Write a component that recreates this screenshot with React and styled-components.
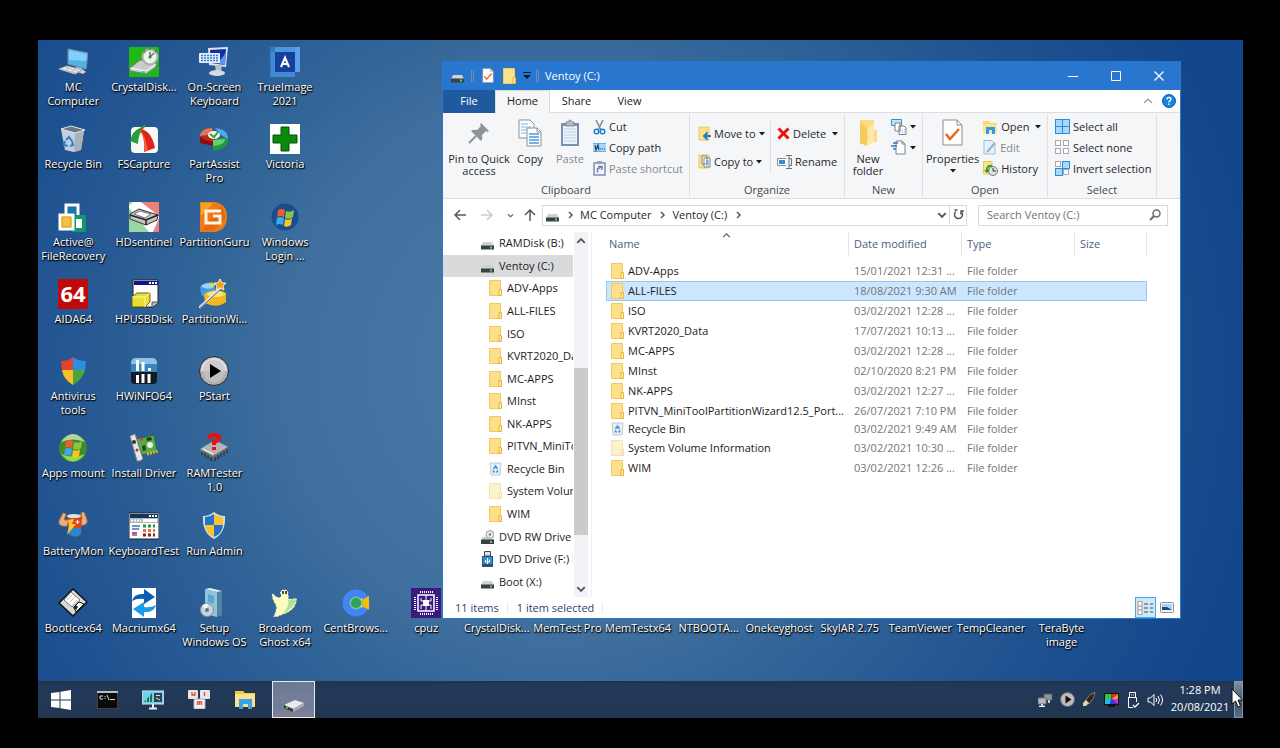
import React from "react";
import styled, { createGlobalStyle, css } from "styled-components";

const GlobalStyle = createGlobalStyle`
  *, *::before, *::after { box-sizing: border-box; }
  body { margin: 0; background: #000; font-family: "Open Sans", "Noto Sans", sans-serif; font-size: 11px; line-height: 12px; color: #1b1b1b; }
  button, input { font: inherit; color: inherit; }
  button { border: 0; padding: 0; margin: 0; background: none; }
  svg { display: block; flex: none; }
`;

/* ---------- screen, desktop, taskbar ---------- */
const Screen = styled.div`
  display: flex;
  min-height: 100vh;
  padding: 40px 37px 30px 38px;
  background: #000;
`;
const Monitor = styled.div`
  position: relative;
  flex: 1;
  min-width: 0;
  display: flex;
  flex-direction: column;
`;
const Desktop = styled.main`
  position: relative;
  flex: 1;
  display: flex;
  background: radial-gradient(circle farthest-corner at 43% 51%, #4b7ba7 0%, #3f6f9e 36%, #316497 48%, #285b94 60%, #1f5290 71%, #12468a 94%);
`;
const IconGrid = styled.div`
  flex: 1;
  display: grid;
  grid-template-columns: repeat(17, 1fr);
  grid-template-rows: repeat(8, 1fr);
  padding: 0 5px 23px 0;
`;
const Shortcut = styled.button`
  grid-column: ${(p) => p.$col};
  grid-row: ${(p) => p.$row};
  min-width: 0;
  display: flex;
  flex-direction: column;
  align-items: center;
  gap: 3px;
  padding-top: 7px;
`;
const ShortcutLabel = styled.span`
  color: #fff;
  line-height: 14px;
  white-space: pre;
  text-align: center;
  text-shadow: 1px 1px 1px #000, 0 1px 2px #000;
`;
const Taskbar = styled.footer`
  display: flex;
  height: 37px;
  background: linear-gradient(#20354b, #22395a 20%, #203650);
`;
const TaskButton = styled.button`
  width: ${(p) => (p.$active ? 43 : 46)}px;
  margin-left: ${(p) => (p.$active ? 4 : 0)}px;
  display: grid;
  place-items: center;
  ${(p) =>
    p.$active &&
    css`
      border: 1px solid #e9ecf2;
      background: linear-gradient(#6d7891, #767f9b 60%, #667f98 62%, #7f7f97 90%);
    `}
`;
const Tray = styled.div`
  margin-left: auto;
  display: flex;
`;
const TrayIcon = styled.button`
  width: 22px;
  display: grid;
  place-items: center;
`;
const Clock = styled.button`
  width: 68px;
  padding-bottom: 3px;
  color: #fff;
  line-height: 17px;
  text-align: center;
`;
const ShowDesktop = styled.button`
  width: 9px;
  border: 1px solid #8796a8;
  background: linear-gradient(#7f90a4, #3c5068 60%, #5a6d84);
`;
const Pointer = styled.div`
  position: absolute;
  right: 0;
  bottom: 10px;
`;

/* ---------- window ---------- */
const Window = styled.section`
  position: absolute;
  inset: 21px 62px 62px 404px;
  display: flex;
  flex-direction: column;
  border: 1px solid #2b78d0;
  border-top: 0;
  background: #fff;
`;
const TitleBar = styled.header`
  display: flex;
  align-items: center;
  height: 29px;
  padding-left: 8px;
  background: #2876cd;
  color: #fff;
`;
const QuickItem = styled.button`
  width: ${(p) => p.$w}px;
  display: flex;
  align-items: center;
`;
const Divider = styled.span`
  width: 3px;
  height: 12px;
  margin-right: ${(p) => p.$gap}px;
  border: 1px solid #6c8dba;
  border-width: 0 1px;
`;
const WindowTitle = styled.h1`
  flex: 1;
  margin: 0;
  font-size: 11px;
  font-weight: 400;
`;
const Caption = styled.button`
  width: 43px;
  height: 100%;
  display: grid;
  place-items: center;
`;
const Tabs = styled.nav`
  display: flex;
  height: 23px;
  padding-right: 4px;
  align-items: stretch;
  border-bottom: 1px solid #dcdde0;
`;
const Tab = styled.button`
  width: 53px;
  margin-bottom: -1px;
  padding-bottom: 2px;
  border: 1px solid transparent;
  border-bottom: 0;
  ${(p) =>
    p.$kind === "file" &&
    css`
      width: 52px;
      background: #1f5a9e;
      color: #fff;
    `}
  ${(p) =>
    p.$kind === "active" &&
    css`
      width: 55px;
      background: #f4f6f8;
      border-color: #dcdde0;
    `}
`;
const TabTools = styled.div`
  margin-left: auto;
  display: flex;
  align-items: center;
  gap: 9px;
`;
const Ribbon = styled.div`
  display: flex;
  height: 86px;
  padding-top: 1px;
  background: #f4f6f8;
  border-bottom: 1px solid #dcdfe2;
`;
const Group = styled.section`
  width: ${(p) => p.$w}px;
  display: flex;
  flex-direction: column;
  margin-bottom: 1px;
  border-right: 1px solid #dfe1e4;
`;
const GroupBody = styled.div`
  flex: 1;
  display: flex;
  padding: 2px 0 0 ${(p) => p.$pad}px;
`;
const GroupTitle = styled.h2`
  margin: 0;
  font-size: 11px;
  line-height: 14px;
  font-weight: 400;
  text-align: center;
  color: #46494e;
`;
const BigButton = styled.button`
  width: ${(p) => p.$w}px;
  display: flex;
  flex-direction: column;
  align-items: center;
  justify-content: flex-start;
  gap: 4px;
  white-space: pre;
  color: ${(p) => (p.disabled ? "#85888d" : "#26282b")};
`;
const BigArt = styled.span`
  height: 33px;
  display: grid;
  place-items: center;
`;
const Stack = styled.div`
  display: flex;
  flex-direction: column;
  width: ${(p) => p.$w}px;
  padding: ${(p) => (p.$loose ? "7px 0 7px" : "0")};
  gap: ${(p) => (p.$loose ? 7 : 0)}px;
  margin-left: ${(p) => p.$ml || 0}px;
`;
const SmallButton = styled.button`
  height: 21px;
  display: flex;
  align-items: center;
  gap: 3px;
  white-space: nowrap;
  text-align: left;
  color: ${(p) => (p.disabled ? "#85888d" : "#26282b")};
`;
const InnerRule = styled.span`
  width: 1px;
  height: 52px;
  margin: 5px 6px 0 0;
  background: #dfe1e4;
`;
const AddressRow = styled.div`
  display: flex;
  align-items: center;
  height: 33px;
  padding: 0 12px 1px 7px;
`;
const NavButton = styled.button`
  width: ${(p) => p.$w || 28}px;
  height: 21px;
  display: grid;
  place-items: center;
`;
const AddressBox = styled.div`
  flex: 1;
  display: flex;
  align-items: center;
  height: 21px;
  margin-right: 11px;
  padding-left: 3px;
  border: 1px solid #d9d9d9;
`;
const Crumb = styled.a`
  color: #26282b;
  text-decoration: none;
`;
const CrumbGap = styled.span`
  width: 21px;
  display: grid;
  place-items: center;
`;
const AddressEnd = styled.span`
  margin-left: auto;
  display: flex;
`;
const Refresh = styled.button`
  width: 17px;
  height: 19px;
  display: grid;
  place-items: center;
  border-left: 1px solid #d9d9d9;
`;
const SearchBox = styled.label`
  width: 190px;
  height: 21px;
  display: flex;
  align-items: center;
  padding: 0 6px 0 8px;
  border: 1px solid #d9d9d9;
`;
const SearchInput = styled.input`
  flex: 1;
  min-width: 0;
  padding: 0;
  border: 0;
  outline: 0;
  background: none;
  &::placeholder { color: #6f7277; opacity: 1; }
`;
const Body = styled.div`
  flex: 1;
  min-height: 0;
  display: flex;
`;
const Tree = styled.ul`
  width: 130px;
  margin: 0;
  padding: 0 0 4px;
  list-style: none;
  overflow: hidden;
  display: grid;
  grid-template-rows: repeat(16, 1fr);
`;
const TreeItem = styled.li`
  display: flex;
  align-items: center;
  gap: 5px;
  padding-left: ${(p) => (p.$level ? 46 : 38)}px;
  overflow: hidden;
  white-space: nowrap;
  background: ${(p) => (p.$selected ? "#d9dadb" : "none")};
`;
const ScrollBar = styled.div`
  width: 14px;
  margin-left: 1px;
  display: flex;
  flex-direction: column;
  background: #f2f3f6;
`;
const ScrollArrow = styled.button`
  height: 17px;
  display: grid;
  place-items: center;
`;
const ScrollTrack = styled.div`
  flex: 1;
  display: flex;
  flex-direction: column;
  padding: 119px 0 45px;
`;
const ScrollThumb = styled.span`
  flex: 1;
  background: #cbcbcb;
`;
const Files = styled.div`
  flex: 1;
  min-width: 0;
  margin-left: 3px;
  padding-left: 14px;
  border-left: 1px solid #f0f1f3;
`;
const FileTable = styled.table`
  position: relative;
  width: 541px;
  height: 246px;
  table-layout: fixed;
  border-collapse: collapse;
`;
const HeadCell = styled.th`
  width: ${(p) => p.$w}px;
  height: 29px;
  padding: 0;
  vertical-align: top;
  font-weight: 400;
  text-align: left;
  color: #4b5f7c;
`;
const HeadLabel = styled.button`
  display: block;
  width: 100%;
  height: 25px;
  padding: 0 0 2px ${(p) => (p.$first ? 3 : 5)}px;
  border-right: 1px solid #e3e5e8;
  text-align: left;
`;
const SortMark = styled.span`
  position: absolute;
  left: 116px;
  top: -1px;
`;
const FileRow = styled.tr`
  background: ${(p) => (p.$selected ? "#cce6fd" : "none")};
  outline: ${(p) => (p.$selected ? "1px solid #90c8f0" : "none")};
  outline-offset: -1px;
`;
const FileCell = styled.td`
  padding: 0 0 0 5px;
  color: #73767b;
  white-space: nowrap;
`;
const FileName = styled.span`
  display: flex;
  align-items: center;
  gap: 4px;
  color: #1b1b1b;
`;
const StatusBar = styled.footer`
  height: 21px;
  display: flex;
  align-items: center;
  padding: 0 3px 0 12px;
  color: #2c4568;
`;
const StatusItem = styled.span`
  padding-right: 8px;
  margin-right: 9px;
  border-right: 1px solid #e6e8eb;
`;
const ViewButtons = styled.span`
  margin-left: auto;
  display: flex;
`;
const ViewButton = styled.button`
  width: 21px;
  height: 21px;
  display: grid;
  place-items: center;
  border: 1px solid ${(p) => (p.$on ? "#4da7da" : "transparent")};
  background: ${(p) => (p.$on ? "#cbe8f6" : "none")};
`;

/* ---------- drawings ---------- */
const Art = ({ w = 30, h = w, box, children }) => (
  <svg width={w} height={h} viewBox={box || `0 0 ${w} ${h}`} fill="none" aria-hidden="true">
    {children}
  </svg>
);
const Flag = ({ x = 0, y = 0, s = 1 }) => (
  <g transform={`translate(${x} ${y}) scale(${s})`}>
    <path d="M2 2 Q5 0 9 2 L8 9 Q4 7 1 9Z" fill="#f0592a" />
    <path d="M10 3 Q14 5 18 2 L17 9 Q13 12 9 10Z" fill="#8cc63e" />
    <path d="M1 10 Q4 8 8 10 L7 17 Q3 15 0 17Z" fill="#3fa9f0" />
    <path d="M9 11 Q13 13 16 10 L15 17 Q11 20 8 18Z" fill="#fcc521" />
  </g>
);
const desktopArt = {
  pc: (
    <Art>
      <path d="M10 2 L30 6 L28 22 L10 17Z" fill="#4eb2ec" stroke="#7d8f9f" />
      <path d="M11 3 L29 7 L28 14 L11 13Z" fill="#7fd0fa" />
      <path d="M18 20 L17 24 L25 27 L28 25 L23 21Z" fill="#c6cdd3" />
      <path d="M1 22 L9 19 L24 23 L17 27Z" fill="#eceff2" stroke="#aab2ba" />
      <path d="M4 22.500 L18 26 M7 20.500 L21 24.500 M11 20 L8 24 M17 22 L13 26" stroke="#b3bbc3" />
    </Art>
  ),
  crystal: (
    <Art>
      <path fill="#1fb814" d="M0 0H30V30H0Z" />
      <path d="M1 21 L11 13 L27 16 V20 L17 27 L1 24Z" fill="#c9cbcd" stroke="#777" />
      <path d="M1 21 L17 24 L27 17" stroke="#fff" />
      <circle cx="21" cy="10" r="7.500" fill="#eef2ee" stroke="#a5b0aa" strokeWidth="2" />
      <path d="M21 0V3 M14 3L16 5 M28 3L26 5 M21 10L25 6 M21 10V5" stroke="#66756d" strokeWidth="1.500" />
      <circle cx="21" cy="10" r="1.500" fill="#208a30" />
      <path d="M13 25l3 .5" stroke="#1d6" strokeWidth="2" />
    </Art>
  ),
  osk: (
    <Art>
      <path d="M9 1 L29 0 L27 20 L10 18Z" fill="#dfe3e8" />
      <path d="M11 3 L27 2 L26 18 L12 16Z" fill="#0f2fa8" />
      <path d="M17 16 Q24 12 27 4 L26 18Z" fill="#5b93f0" />
      <path d="M16 18h7l-1 7h-5z" fill="#b9c2cb" />
      <ellipse cx="18" cy="26" rx="8" ry="3" fill="#d6dbe0" />
      <rect x="0" y="6" width="21" height="10" rx="1" fill="#e7eef7" />
      <path d="M2 8.500H19 M2 11H19 M2 13.500H19" stroke="#2f7fd0" strokeWidth="1.500" strokeDasharray="2 1" />
    </Art>
  ),
  trueimage: (
    <Art>
      <path d="M5 0H30V25H5Z" fill="#5ba0e8" />
      <path d="M0 0H25V30H0Z" fill="#3f8fe0" opacity=".55" />
      <path d="M1 5H25V30H1Z" fill="#4a95e2" opacity=".6" />
      <path d="M5 5H25V25H5Z" fill="#173f9c" />
      <path d="M11 20 L15 10.500 L19 20 M12.500 17H17.500" stroke="#fff" strokeWidth="2" />
    </Art>
  ),
  bin: (
    <Art>
      <path d="M3 5 L26 7 L23 26 L16 28 L7 26Z" fill="#c7d0d8" />
      <path d="M17 9 L26 6 L23 26 L16 28Z" fill="#a7b2bd" />
      <path d="M3 5 L13 2 L27 6 L17 9Z" fill="#6b7783" stroke="#e1e7ec" />
      <path d="M8 16l3-3 3 4M7 17l-1 4 4 1M12 22l3-1-1-4" stroke="#2385d8" strokeWidth="2" />
    </Art>
  ),
  fscapture: (
    <Art>
      <rect x="2" y="3" width="27" height="26" rx="4" fill="#f7f7f7" />
      <path d="M11 4 L16 0 L16 3 Q9 9 9 20 L1 17 Q3 7 11 4Z" fill="#25a035" />
      <path d="M10 5 Q22 5 26 24 L15 28 Q17 14 10 5Z" fill="#dd2418" />
      <path d="M10 5 Q15 7 19 26 L15 28 Q17 14 10 5Z" fill="#f45c40" />
    </Art>
  ),
  partassist: (
    <Art>
      <path d="M1 13v6l14 3v-6Z" fill="#8e0c0c" />
      <path d="M14 16 L29 13v5q-3 8-15 9Z" fill="#239a42" />
      <path d="M1 12 Q2 4 13 4 L14 10Z" fill="#f0724d" />
      <path d="M16 4 Q29 5 29 15 L22 11Z" fill="#50a9ed" />
      <path d="M1 12 L10 12 L15 16 L15 18 Q4 17 1 12Z" fill="#c52218" />
      <path d="M14 16 L26 15 Q26 21 14 22Z" fill="#68cf70" />
      <ellipse cx="15" cy="11" rx="6" ry="4" fill="#f1f6ee" />
      <path d="M11 10l4 3 4-5" stroke="#38a030" strokeWidth="2" />
    </Art>
  ),
  victoria: (
    <Art>
      <path d="M0 0H30V30H0Z" fill="#fff" />
      <path d="M11 3H19V11H27V19H19V27H11V19H3V11H11Z" fill="#0a8a0a" stroke="#04550a" />
    </Art>
  ),
  active: (
    <Art>
      <path d="M8 3H20V15H8Z" fill="#1b62a5" stroke="#fff" strokeWidth="3" />
      <path d="M10 5H18V13H10Z" fill="#1475b5" />
      <path d="M16 15H26V28H16Z" fill="#fff" stroke="#12966d" strokeWidth="4" />
      <path d="M2 13H15V27H2Z" fill="#f1c243" stroke="#fff" strokeWidth="3" />
      <path d="M4 15H13V25H4Z" stroke="#d99f20" />
    </Art>
  ),
  hds: (
    <Art>
      <path d="M0 0H30V30H0Z" fill="#fff" />
      <path d="M12 0H30V14Z M30 16V30H24Z" fill="#ee6058" opacity=".8" />
      <path d="M0 6V30H20Z M0 0H4L0 4Z" fill="#7fca8e" opacity=".8" />
      <path d="M1 12 L10 7 L29 13 L28 18 L17 23 L1 17Z" fill="#c4c4c4" stroke="#333" />
      <path d="M1 13 L17 18 L29 13 M17 18V23" stroke="#222" strokeWidth="1.500" />
      <path d="M5 12 L11 9 L22 12 L16 16Z" fill="#fff" stroke="#777" />
    </Art>
  ),
  guru: (
    <Art>
      <path d="M1 0H16 Q28 2 28 15 Q28 28 16 30H1Z" fill="#ee7c14" />
      <path d="M2 1H14 L2 14Z" fill="#f6a42a" />
      <path d="M3 28 L22 4 Q27 10 26 17 L14 29Z" fill="#dd5d12" opacity=".6" />
      <path d="M22 9H7V21H21V14H14" stroke="#fff4e2" strokeWidth="3" />
    </Art>
  ),
  login: (
    <Art>
      <circle cx="15" cy="15" r="13.500" fill="#174e8f" />
      <Flag x={6} y={6} />
    </Art>
  ),
  aida: (
    <Art>
      <path d="M0 0H30V30H0Z" fill="#bf0a0a" />
      <text x="15" y="23" textAnchor="middle" fontFamily="Open Sans" fontWeight="700" fontSize="22" fill="#fff">64</text>
    </Art>
  ),
  hpusb: (
    <Art>
      <path d="M4 1H29V24L24 28H4Z" fill="#fff" stroke="#222" />
      <path d="M5 2H29V6H5Z" fill="#101090" />
      <path d="M20 4h8" stroke="#fff" strokeWidth="2" strokeDasharray="2 1" />
      <path d="M23 28V23H29" fill="#b9b9b9" stroke="#555" />
      <path d="M3 18 L8 14 H21 V23 L16 28 H3Z" fill="#e7de3c" stroke="#6b6200" />
      <path d="M3 18H16V28 M16 18L21 14" stroke="#fffa9a" />
    </Art>
  ),
  wizard: (
    <Art>
      <path d="M1 8 Q5 2 16 4 V18 Q6 22 2 15Z" fill="#3f9be8" />
      <path d="M2 7 Q8 2 16 5 L14 9 Q6 11 2 7Z" fill="#9fd2f7" />
      <path d="M5 15 Q16 8 27 14 V23 Q18 30 6 24Z" fill="#f0b91f" />
      <ellipse cx="17" cy="15" rx="9" ry="3" fill="#fbe274" />
      <path d="M21 0l2 4 4 0-3 3 1 4-4-2-4 2 1-4-3-3 4 0Z" fill="#f39a20" stroke="#fff0b0" />
      <path d="M13 3l1 2 2 0-1 2-3 1-1-3Z M24 12l1 2 2 0-2 3-2-1Z" fill="#d8e23a" />
      <path d="M0 29 L22 9" stroke="#dfe3ea" strokeWidth="2.500" />
      <path d="M0 30 L22 10" stroke="#596273" />
    </Art>
  ),
  antivirus: (
    <Art>
      <path d="M15 1 Q10 5 3 5 L4 14 H15Z" fill="#e0442e" />
      <path d="M15 1 Q20 5 28 5 L27 14 H15Z" fill="#2f8fdf" />
      <path d="M4 14 H15 V29 Q5 23 4 14Z" fill="#f9c126" />
      <path d="M27 14 H15 V29 Q25 23 27 14Z" fill="#4ba63a" />
    </Art>
  ),
  hwinfo: (
    <Art>
      <rect x="2" y="2" width="26" height="26" rx="4" fill="#141a22" />
      <path d="M2 16V6Q2 2 6 2H24Q28 2 28 6V16Z" fill="#3a86bc" />
      <path d="M2 8Q2 2 6 2H24Q28 2 28 8Z" fill="#8cc2e4" />
      <path d="M8.500 4V15 M14 6V15 M8.500 19V27 M14 18V27 M20 18V27" stroke="#fff" strokeWidth="3" />
      <path d="M19 12h3v3h-3z" fill="#fff" />
    </Art>
  ),
  pstart: (
    <Art>
      <circle cx="15" cy="15" r="14.500" fill="#b0b0b0" stroke="#2a2a2a" />
      <path d="M2 15 A13 13 0 0 1 28 15Z" fill="#dedede" />
      <circle cx="15" cy="15" r="11" fill="#c4c4c4" opacity=".7" />
      <path d="M11 8 L22 15 L11 22Z" fill="#000" />
    </Art>
  ),
  apps: (
    <Art>
      <circle cx="15" cy="15" r="14" fill="#3f8c2c" />
      <path d="M3 9 Q15 -7 27 9 Q15 4 3 9Z" fill="#b5d6a4" />
      <path d="M3 21 Q15 36 27 21 Q15 26 3 21Z" fill="#93dd48" />
      <Flag x={6} y={6} />
    </Art>
  ),
  driver: (
    <Art>
      <path d="M7 6 L25 2 L28 18 L13 22Z" fill="#57aa4c" stroke="#2c6a28" />
      <path d="M1 3 L6 1 L14 26 L11 28 L8 28Z" fill="#e4e6e8" stroke="#7b8086" />
      <circle cx="5" cy="9" r="2" fill="#333" /><circle cx="8" cy="17" r="1.500" fill="#a33" />
      <circle cx="21" cy="12" r="3" fill="#e6f3e2" />
      <path d="M17 5l5-1 1 3-5 1z M13 13l3-1 1 5-3 1z" fill="#243a24" />
      <path d="M11 7l3-1" stroke="#e33" strokeWidth="2" />
      <path d="M18 21 L29 18" stroke="#e3b63a" strokeWidth="3" strokeDasharray="2 1" />
    </Art>
  ),
  ram: (
    <Art>
      <path d="M1 16 L16 7 L29 14 L14 23Z" fill="#b4b4b4" />
      <path d="M1 16 L14 23 V26 L1 18Z M14 23 L29 14 V17 L14 26Z" fill="#6d6d6d" />
      <path d="M3 19v3 M6 20v4 M9 22v4 M12 24v4 M16 24v4 M19 22v4 M22 20v4 M25 18v4 M28 16v4" stroke="#222" />
      <path d="M4 16 L14 21" stroke="#fff" />
      <path d="M10 6 Q10 2 15 2 Q20 2 20 5 Q20 8 15 9 V12" stroke="#f20d0d" strokeWidth="4" />
      <path d="M13 14h4v3h-4z" fill="#f20d0d" />
    </Art>
  ),
  battery: (
    <Art>
      <path d="M9 15 Q0 16 1 10 L5 2 L8 3 L6 9 L11 9Z M22 14 Q30 15 29 9 L26 1 L23 2 L24 8 L20 9Z" fill="#e9b083" stroke="#b57845" />
      <path d="M9 5 H24 L23 23 Q17 28 11 23Z" fill="#d8461c" />
      <ellipse cx="16" cy="5" rx="7" ry="2" fill="#dfe3e6" />
      <path d="M11 17 H23 L23 23 Q17 28 11 23Z" fill="#2f86cf" />
      <path d="M10 9 L16 8 L14 13 L18 13 L9 24 L11 15Z" fill="#f8ca2b" />
      <path d="M19.500 9v4M17.500 11h4" stroke="#fff" />
    </Art>
  ),
  kbtest: (
    <Art>
      <path d="M0 2H30V28H0Z" fill="#fff" stroke="#222" />
      <path d="M1 3H29V7H1Z" fill="#10365f" />
      <path d="M20 5h8" stroke="#fff" strokeWidth="2" strokeDasharray="2 1" />
      <path d="M1 7H29V12H1Z" fill="#b3b7bd" />
      <path d="M2 9.500H12" stroke="#fff" strokeWidth="2" strokeDasharray="2 1" /><path d="M14 9.500H28" stroke="#fff" strokeWidth="3" />
      <path d="M3 15H11M3 18H10M3 24H8" stroke="#3b73c4" strokeWidth="1.500" /><path d="M3 22h5" stroke="#e44" strokeWidth="2" />
      <path d="M14 15h12" stroke="#293" strokeWidth="3" strokeDasharray="3 2" /><path d="M14 19.500h12" stroke="#d73" strokeWidth="3" strokeDasharray="3 2" /><path d="M14 24h12" stroke="#822" strokeWidth="3" strokeDasharray="3 2" />
    </Art>
  ),
  admin: (
    <Art>
      <path d="M15 1 Q20 5 26 5 Q27 22 15 28 Q3 22 4 5 Q10 5 15 1Z" fill="#d6dde6" />
      <path d="M15 3 Q11 6 6 6 V14 H15Z M15 14 H24 Q23 23 15 26Z" fill="#2373ce" />
      <path d="M15 3 Q19 6 24 6 V14 H15Z M15 14 H6 Q7 23 15 26Z" fill="#f9c52b" />
    </Art>
  ),
  floppy: (
    <Art>
      <path d="M15 1 L29 14 L15 28 L1 15Z" fill="#d9d9d9" stroke="#111" strokeWidth="1.500" />
      <path d="M13 4 L22 12 L14 19 L6 12Z" fill="#fff" stroke="#777" />
      <path d="M9 12 L14 7 M12 14 L17 9 M14 17 L19 12" stroke="#bbb" />
      <path d="M16 19 L21 14 L26 16 L18 24Z" fill="#fff" stroke="#111" />
      <path d="M18 17l2 2-2 3-3-2z" fill="#222" />
    </Art>
  ),
  macrium: (
    <Art>
      <path d="M3 0H27V30H3Z" fill="#fff" />
      <path d="M3 13 Q5 5 15 6 V1 L26 9 L15 16 V11 Q8 10 3 13Z" fill="#0c5fb0" />
      <path d="M27 17 Q25 25 15 24 V29 L4 21 L15 14 V19 Q22 20 27 17Z" fill="#1d9ae8" />
    </Art>
  ),
  setup: (
    <Art>
      <path d="M6 1 L18 4 V29 L6 26Z" fill="#8fc4df" />
      <path d="M18 4 L23 3 V27 L18 29Z" fill="#52849e" />
      <path d="M6 1 L11 0 L23 3 L18 4Z" fill="#dff1f8" />
      <path d="M9 6 L15 8 V16 L9 14Z" fill="#5fa6cb" />
      <circle cx="8" cy="22" r="6.500" fill="#cdd3d8" stroke="#848d96" />
      <path d="M8 22 L3 18 A6 6 0 0 1 9 16Z" fill="#f4f7f9" />
      <circle cx="8" cy="22" r="2" fill="#52789a" />
    </Art>
  ),
  ghost: (
    <Art>
      <path d="M10 4 Q13 -1 18 3 L19 11 L27 10 Q27 20 17 25 L7 29 L3 29 Q8 20 5 16 Q1 10 2 5 L7 9 L11 9Z" fill="#fdfbbd" stroke="#2b62c8" strokeDasharray="2 2" />
      <path d="M27 11 Q25 20 12 26 Q20 18 18 12Z" fill="#b4e29a" />
      <path d="M13 3v3M16 3v3" stroke="#111" strokeWidth="1.500" />
    </Art>
  ),
  cent: (
    <Art>
      <circle cx="15" cy="15" r="13.500" fill="#4285f4" />
      <path d="M15 15 L28 8 V22Z" fill="#fbbc05" />
      <path d="M15 15 L21 10 V20Z" fill="#fff" />
      <circle cx="15" cy="15" r="6.500" fill="#7fc0a5" />
      <circle cx="15" cy="15" r="5" fill="#2fa44f" />
    </Art>
  ),
  cpuz: (
    <Art>
      <path d="M0 0H30V30H0Z" fill="#3b1a80" />
      <path d="M7 7H23V23H7Z" stroke="#fff" strokeWidth="1.500" />
      <path d="M12 12H18V18H12Z" fill="#fff" />
      <path d="M9 4H22 M9 26H22" stroke="#fff" strokeWidth="2" strokeDasharray="1 1" />
      <path d="M4 9V22 M26 9V22" stroke="#fff" strokeWidth="2" strokeDasharray="1 1" />
      <path d="M10 10V13H12 M20 10V13H18 M10 21V17H12 M20 21V17H18 M15 7V12M15 18V23" stroke="#fff" />
    </Art>
  ),
};

const Folder = ({ w = 13, h = 16, pale }) => (
  <Art w={w} h={h} box="0 0 13 16">
    <path d="M.5 .5H11.500V15.500H.5Z" fill={pale ? "#fbf3cd" : "#ffe08a"} stroke={pale ? "#f5e3ab" : "#efc862"} />
    <path d="M10 9.500V15.500H12.500V9.500Z" fill={pale ? "#fdf6d9" : "#ffeaa6"} stroke={pale ? "#f0dca0" : "#e5b53c"} />
  </Art>
);
const Drive = () => (
  <Art w={13} h={14}>
    <path d="M2 6H11L13 10H0Z" fill="#cfd1d3" />
    <path d="M0 9.500H13V13.500H0Z" fill="#3c4043" />
    <path d="M9 11.500h2" stroke="#3fe04a" strokeWidth="2" />
  </Art>
);
const MiniBin = () => (
  <Art w={13} h={14}>
    <path d="M1 1H12L11 13H2Z" fill="#e9eef2" stroke="#c3cbd2" />
    <path d="M4.500 7L6.500 4L8.500 7M4 8.500L5.500 10.500M9 8.500L7.500 10.500" stroke="#3597d8" strokeWidth="1.500" />
  </Art>
);
const DvdDrive = () => (
  <Art w={13} h={14}>
    <circle cx="9" cy="4.500" r="4" fill="#e8eaec" stroke="#999fa5" />
    <circle cx="9" cy="4.500" r="1.200" fill="#777" />
    <path d="M2 7H9L13 10H0Z" fill="#c2c5c8" /><path d="M0 9.500H13V14H0Z" fill="#3c4043" />
    <path d="M9 12h2" stroke="#3fe04a" strokeWidth="2" />
  </Art>
);
const UsbDrive = () => (
  <Art w={13} h={16}>
    <path d="M3.500 .5H9.500V5H3.500Z" fill="#dde1e5" stroke="#454b52" />
    <path d="M1 5H12V16H1Z" fill="#20547e" /><path d="M2 6H11V13H2Z" fill="#2f8fcf" />
    <path d="M6.500 7V13M4.500 9V11H8.500V8.500" stroke="#fff" />
  </Art>
);
const Chevron = ({ dir = "right", s = 8, color = "#55585c", sw = 1.5 }) => {
  const d = { right: "M3 1L6 4L3 7", down: "M1 2.500L4 5.500L7 2.500", up: "M1 5.500L4 2.500L7 5.500" }[dir];
  return (
    <Art w={s} h={s} box="0 0 8 8">
      <path d={d} stroke={color} strokeWidth={sw} />
    </Art>
  );
};
const Caret = ({ color = "#1b1b1b" }) => (
  <Art w={6} h={4}><path d="M0 0H6L3 3.500Z" fill={color} /></Art>
);
const Arrow = ({ d, color }) => (
  <Art w={12} h={12}><path d={d} stroke={color} strokeWidth="1.500" /></Art>
);
const Tick = ({ w, h }) => (
  <Art w={w} h={h} box="0 0 21 27">
    <path d="M1 1H15L20 6V26H1Z" fill="#fff" stroke="#8a8d91" />
    <path d="M15 1V6H20" stroke="#8a8d91" />
    <path d="M4 15L8 20L17 10" stroke="#ee6420" strokeWidth="2.500" />
  </Art>
);
const ribbonArt = {
  pin: (
    <Art w={22} h={22}>
      <path d="M13 1L21 9L19 10L18 9L14 13Q15 17 13 19L3 9Q5 7 9 8L13 4L12 3Z" fill="#8b969b" />
      <path d="M8 14L1 21" stroke="#8b969b" strokeWidth="2" />
    </Art>
  ),
  copy: (
    <Art w={24} h={28}>
      <path d="M1 1H12L16 5V19H1Z" fill="#fff" stroke="#8a9098" />
      <path d="M3 5H10M3 8H13M3 11H13M3 14H13" stroke="#79b4ea" />
      <path d="M9 9H19L23 13V27H9Z" fill="#fff" stroke="#8a9098" /><path d="M19 9V13H23" stroke="#8a9098" />
      <path d="M11 15H21M11 18H21M11 21H21M11 24H21" stroke="#4a97e0" strokeWidth="1.500" />
    </Art>
  ),
  paste: (
    <Art w={20} h={28}>
      <path d="M1 4H19V27H1Z" fill="#7c8fb3" /><path d="M3 7H17V25H3Z" fill="#eef3fa" />
      <path d="M4 10H16M4 13H16M4 16H16M4 19H16M4 22H16" stroke="#bcd0ea" />
      <path d="M6 3H8Q10 -1 12 3H14V7H6Z" fill="#b5bac2" stroke="#858b95" />
    </Art>
  ),
  cut: (
    <Art w={13} h={16}>
      <path d="M3 1L8 11M10 1L5 11" stroke="#7e8790" strokeWidth="1.500" />
      <circle cx="3.500" cy="12.500" r="2.300" stroke="#1d7fd0" strokeWidth="1.500" />
      <circle cx="9.500" cy="12.500" r="2.300" stroke="#1d7fd0" strokeWidth="1.500" />
    </Art>
  ),
  path: (
    <Art w={13} h={9}>
      <path d="M0 0H13V9H0Z" fill="#a5d8f6" /><path d="M0 .5H13M0 8.500H13" stroke="#69b1de" />
      <path d="M2 2L3 7L5 2L6 7" stroke="#1c3e5c" strokeWidth="1.200" /><path d="M7 6H12" stroke="#1c3e5c" strokeDasharray="1 1" />
    </Art>
  ),
  shortcut: (
    <Art w={13} h={15}>
      <path d="M1 2H12V14H1Z" fill="#f2f5fa" stroke="#7f8fb5" strokeWidth="1.500" /><path d="M4 0H9V3H4Z" fill="#9aa3b5" />
      <path d="M4.500 11.500V8L8 6M5 5.500H9V9" stroke="#6c84b5" strokeWidth="1.500" />
    </Art>
  ),
  move: (
    <Art w={13} h={15}>
      <path d="M1 1H11V14H1Z" fill="#ffe08a" stroke="#efc862" />
      <path d="M13 10H8M8.500 7.500L6 10L8.500 12.500Z" stroke="#1d7fd0" strokeWidth="2" fill="#1d7fd0" />
    </Art>
  ),
  copyto: (
    <Art w={13} h={15}>
      <path d="M1 1H11V14H1Z" fill="#ffe08a" stroke="#efc862" />
      <path d="M4 2H9V10H4Z M6 4H12V13H6Z" fill="#fff" stroke="#7d858e" /><path d="M8 7H11M8 9H11M8 11H11" stroke="#4a97e0" />
    </Art>
  ),
  del: (
    <Art w={13} h={13}><path d="M1.500 1.500L11.500 11.500M11.500 1.500L1.500 11.500" stroke="#e81212" strokeWidth="3" /></Art>
  ),
  rename: (
    <Art w={15} h={14}>
      <path d="M9 3.500H.5V10.500H9" fill="#fff" stroke="#8a9098" /><path d="M2 5H8V9H2Z" fill="#2e90dd" />
      <path d="M9 .5H15M12 .5V13.500M9 13.500H15M12 3.500H14.500V10.500H12" stroke="#6c7278" />
    </Art>
  ),
  newfolder: (
    <Art w={19} h={26}>
      <path d="M1 0H15V10H18V22H8L1 24Z" fill="#fbdc84" /><path d="M1 1L8 8V26L1 23Z" fill="#f5c95c" />
      <path d="M8 8Q11 15 8 26L15 22V4Z" fill="#ffe9a8" />
    </Art>
  ),
  newitem: (
    <Art w={16} h={16}>
      <path d="M.5 .5H10.500V6.500H.5Z" fill="#bfe3f4" stroke="#3f8fb5" />
      <path d="M4 4H9V12H4Z M8 7H13L15 9V15.500H8Z" fill="#fff" stroke="#7b8288" /><path d="M9 11H14M9 13H14" stroke="#7fb3dd" strokeDasharray="1 1" />
    </Art>
  ),
  easy: (
    <Art w={16} h={15}>
      <path d="M5 1H11L14 4V14H5Z" fill="#fff" stroke="#7b8288" /><path d="M11 1V4H14" stroke="#7b8288" />
      <path d="M2 3H7M0 6H6M2 9H5" stroke="#2a7ec6" strokeWidth="1.500" />
    </Art>
  ),
  open: (
    <Art w={15} h={14}>
      <path d="M0 1H6L7 3H14V12H0Z" fill="#fbd869" /><path d="M0 4H14V13H0Z" fill="#ffe48f" />
      <path d="M3 14V7H12V14H9V10H6V14Z" fill="#2d9be8" />
    </Art>
  ),
  edit: (
    <Art w={14} h={15}>
      <path d="M1 .5H9L12 4V14H1Z" fill="#e4f1fa" stroke="#a5bccd" /><path d="M4 12L12 3" stroke="#8fb3cb" strokeWidth="2" />
    </Art>
  ),
  history: (
    <Art w={15} h={15}>
      <path d="M.5 .5H9V13H.5Z" fill="#ffe08a" stroke="#efc862" />
      <circle cx="10" cy="10" r="4.500" fill="#dfe6e0" stroke="#6f7780" /><path d="M10 7V10H13" stroke="#333" />
      <path d="M4 9Q4 4 9 5" stroke="#22a030" strokeWidth="2" /><path d="M1 9H7L4 12Z" fill="#22a030" />
    </Art>
  ),
};
const SelectArt = ({ on = [] }) => (
  <Art w={15} h={15}>
    {[[0, 0], [8, 0], [0, 8], [8, 8]].map(([x, y], i) =>
      on.includes(i) ? (
        <rect key={i} x={x ? 7.5 : 0.5} y={y ? 7.5 : 0.5} width="7" height="7" fill="#a8d9fb" stroke="#2b8cdc" />
      ) : (
        <rect key={i} x={x + 0.5} y={y + 0.5} width="5" height="5" fill="#fff" stroke="#a6aaaf" />
      )
    )}
  </Art>
);

const taskArt = {
  start: (
    <Art w={20} h={20}>
      <path d="M0 3L8.500 2V9.500H0Z M9.500 1.800L20 0V9.500H9.500Z M0 10.500H8.500V18L0 17Z M9.500 10.500H20V20L9.500 18.200Z" fill="#fff" />
    </Art>
  ),
  cmd: (
    <Art w={21} h={18}>
      <path d="M0 0H21V18H0Z" fill="#0a0a0a" stroke="#777" /><path d="M0 1H21" stroke="#b9bcc0" strokeWidth="2" />
      <path d="M6 5H3V8H6M8 5V6M8 7V8M10 4L12 9M13 8.500H18" stroke="#d8d8d8" />
    </Art>
  ),
  monitor: (
    <Art w={22} h={20}>
      <path d="M0 1H22V14H0Z" fill="#6fd0f2" stroke="#d9e2e8" />
      <path d="M2 12L10 3V12Z" fill="#187a3c" /><path d="M4.500 3V13M7.500 3V13" stroke="#6fd0f2" />
      <path d="M12 3H20V12H12Z" fill="#34444f" /><path d="M14 5.500H18M14 8L18 10" stroke="#d5dee4" />
      <path d="M11 14V18M7 18.500H15" stroke="#eef1f4" strokeWidth="2" />
    </Art>
  ),
  keys: (
    <Art w={22} h={19}>
      <rect x="0" y="0" width="10" height="9" rx="1" fill="#e9e6e6" /><rect x="12" y="0" width="10" height="9" rx="1" fill="#e9e6e6" /><rect x="6" y="9" width="11" height="10" rx="1" fill="#f2efef" stroke="#b9b4b4" />
      <path d="M4 2V5H7V2 M16.500 2V6 M9.500 15V12H11.500V15M11.500 12H13.500V15" stroke="#e04a3c" strokeWidth="1.300" />
    </Art>
  ),
  explorer: (
    <Art w={21} h={20}>
      <path d="M0 1H8L10 3H20V16H0Z" fill="#f6c945" /><path d="M0 4H20V17H0Z" fill="#ffe08a" />
      <path d="M4 19V9H17V19H13V14H8V19Z" fill="#35a2ea" />
    </Art>
  ),
  drive: (
    <Art w={22} h={24}>
      <path d="M1 17L12 12L21 15L10 21Z" fill="#e9eaec" /><path d="M1 17L10 21V24L1 20Z" fill="#2e3a34" />
      <path d="M10 21L21 15V18L10 24Z" fill="#a9adb2" /><path d="M3 19L5 20" stroke="#48d04c" strokeWidth="2" />
    </Art>
  ),
};
const trayArt = {
  net: (
    <Art w={15} h={14}>
      <path d="M6 1H14V7H6Z" fill="#8f969d" stroke="#555c63" /><path d="M0 5H8V11H0Z" fill="#b5bac0" stroke="#6d747b" />
      <path d="M4 11V13M1 13.500H7M11 7V10" stroke="#fff" strokeWidth="1.500" />
    </Art>
  ),
  play: (
    <Art w={15} h={15}>
      <circle cx="7.500" cy="7.500" r="7" fill="#bdbdbd" stroke="#666" /><path d="M5.500 3.500L11.500 7.500L5.500 11.500Z" fill="#111" />
    </Art>
  ),
  pen: (
    <Art w={14} h={15}>
      <path d="M13 0Q13 6 7 12L3 9Q7 2 13 0Z" fill="#2a2622" stroke="#887f70" /><path d="M4 8L7 11L4 14L1 14L1 11Z" fill="#e2d4ae" />
    </Art>
  ),
  color: (
    <Art w={15} h={14}>
      <path d="M0 0H15V12H0Z" fill="#111" />
      <path d="M1 1H7L7.500 6Z M1 1V6H7.500Z" fill="#31c53d" /><path d="M7 1H14L7.500 6Z" fill="#e82a22" /><path d="M14 1V6H7.500Z" fill="#f0a020" />
      <path d="M1 6V11H6L7.500 6Z" fill="#24b8f0" /><path d="M6 11H14L7.500 6Z" fill="#2b3df0" /><path d="M14 6V11L7.500 6Z" fill="#e82cc8" />
      <path d="M4 13H11" stroke="#111" strokeWidth="2" />
    </Art>
  ),
  usb: (
    <Art w={13} h={16}>
      <path d="M2.500 5V.5H8.500V5M1 5.500H9.500V10M1.500 5.500V15.500H6" stroke="#fff" /><path d="M4 3H5M6 3H7" stroke="#fff" /><path d="M6 13L8 15L12 11" stroke="#fff" strokeWidth="1.300" />
    </Art>
  ),
  sound: (
    <Art w={17} h={14}>
      <path d="M1 5H3.500L7 1.500V12.500L3.500 9H1Z" stroke="#fff" /><path d="M9 5Q10.500 7 9 9M11 3Q14 7 11 11M13.500 1.500Q17.500 7 13.500 12.500" stroke="#fff" />
    </Art>
  ),
};

/* ---------- data ---------- */
const shortcuts = [
  ["pc", "MC\nComputer", 1, 1], ["crystal", "CrystalDisk...", 2, 1], ["osk", "On-Screen\nKeyboard", 3, 1], ["trueimage", "TrueImage\n2021", 4, 1],
  ["bin", "Recycle Bin", 1, 2], ["fscapture", "FSCapture", 2, 2], ["partassist", "PartAssist\nPro", 3, 2], ["victoria", "Victoria", 4, 2],
  ["active", "Active@\nFileRecovery", 1, 3], ["hds", "HDsentinel", 2, 3], ["guru", "PartitionGuru", 3, 3], ["login", "Windows\nLogin ...", 4, 3],
  ["aida", "AIDA64", 1, 4], ["hpusb", "HPUSBDisk", 2, 4], ["wizard", "PartitionWi...", 3, 4],
  ["antivirus", "Antivirus\ntools", 1, 5], ["hwinfo", "HWiNFO64", 2, 5], ["pstart", "PStart", 3, 5],
  ["apps", "Apps mount", 1, 6], ["driver", "Install Driver", 2, 6], ["ram", "RAMTester\n1.0", 3, 6],
  ["battery", "BatteryMon", 1, 7], ["kbtest", "KeyboardTest", 2, 7], ["admin", "Run Admin", 3, 7],
  ["floppy", "BootIcex64", 1, 8], ["macrium", "Macriumx64", 2, 8], ["setup", "Setup\nWindows OS", 3, 8], ["ghost", "Broadcom\nGhost x64", 4, 8],
  ["cent", "CentBrows...", 5, 8], ["cpuz", "cpuz", 6, 8], [null, "CrystalDisk...", 7, 8], [null, "MemTest Pro", 8, 8], [null, "MemTestx64", 9, 8],
  [null, "NTBOOTA...", 10, 8], [null, "Onekeyghost", 11, 8], [null, "SkyIAR 2.75", 12, 8], [null, "TeamViewer", 13, 8], [null, "TempCleaner", 14, 8], [null, "TeraByte\nimage", 15, 8],
];
const files = [
  ["ADV-Apps", "15/01/2021 12:31 ..."], ["ALL-FILES", "18/08/2021 9:30 AM"], ["ISO", "03/02/2021 12:28 ..."], ["KVRT2020_Data", "17/07/2021 10:13 ..."],
  ["MC-APPS", "03/02/2021 12:28 ..."], ["MInst", "02/10/2020 8:21 PM"], ["NK-APPS", "03/02/2021 12:27 ..."], ["PITVN_MiniToolPartitionWizard12.5_Port...", "26/07/2021 7:10 PM"],
  ["Recycle Bin", "03/02/2021 9:49 AM"], ["System Volume Information", "03/02/2021 10:30 ..."], ["WIM", "03/02/2021 12:26 ..."],
];
const fileIcon = (name) => (name === "Recycle Bin" ? <MiniBin /> : <Folder pale={name.startsWith("System")} />);
const tree = [
  { icon: <Drive />, name: "RAMDisk (B:)" },
  { icon: <Drive />, name: "Ventoy (C:)", selected: true },
  ...files.map(([n]) => ({ icon: fileIcon(n), name: n.startsWith("PITVN") ? "PITVN_MiniToolPartition" : n, level: 1 })),
  { icon: <DvdDrive />, name: "DVD RW Drive" },
  { icon: <UsbDrive />, name: "DVD Drive (F:) ESD" },
  { icon: <Drive />, name: "Boot (X:)" },
];

const RibbonGroup = ({ title, w, pad, children }) => (
  <Group $w={w}>
    <GroupBody $pad={pad}>{children}</GroupBody>
    <GroupTitle>{title}</GroupTitle>
  </Group>
);

function Explorer() {
  return (
    <Window>
      <TitleBar>
        <QuickItem $w={20} aria-label="Drive"><Drive /></QuickItem>
        <Divider $gap={8} />
        <QuickItem $w={21} aria-label="Properties"><Tick w={12} h={15} /></QuickItem>
        <QuickItem $w={20} aria-label="New folder"><Folder w={13} h={16} /></QuickItem>
        <QuickItem $w={13} aria-label="Customize">
          <Art w={8} h={7}><path d="M0 .5H8" stroke="#0c1a2a" /><path d="M0 3H8L4 7Z" fill="#0c1a2a" /></Art>
        </QuickItem>
        <Divider $gap={6} />
        <WindowTitle>Ventoy (C:)</WindowTitle>
        <Caption aria-label="Minimize"><Art w={10} h={10}><path d="M0 5.500H10" stroke="#fff" /></Art></Caption>
        <Caption aria-label="Maximize"><Art w={10} h={10}><path d="M.5 .5H9.500V9.500H.5Z" stroke="#fff" /></Art></Caption>
        <Caption aria-label="Close"><Art w={10} h={10}><path d="M.5 .5L9.500 9.500M9.500 .5L.5 9.500" stroke="#fff" strokeWidth="1.200" /></Art></Caption>
      </TitleBar>
      <Tabs>
        <Tab $kind="file">File</Tab>
        <Tab $kind="active">Home</Tab>
        <Tab>Share</Tab>
        <Tab>View</Tab>
        <TabTools>
          <button aria-label="Collapse ribbon"><Chevron dir="up" s={10} color="#8b8e92" sw={1} /></button>
          <button aria-label="Help">
            <Art w={14} h={14}>
              <circle cx="7" cy="7" r="6.500" fill="#1583dd" stroke="#0e5ea8" />
              <path d="M5 5.500Q5 3.500 7 3.500Q9 3.500 9 5.300Q9 6.500 7 7.500V8.500M7 9.500V11" stroke="#fff" strokeWidth="1.300" />
            </Art>
          </button>
        </TabTools>
      </Tabs>
      <Ribbon>
        <RibbonGroup title="Clipboard" w={247} pad={4}>
          <BigButton $w={64}><BigArt>{ribbonArt.pin}</BigArt>{"Pin to Quick\naccess"}</BigButton>
          <BigButton $w={38}><BigArt>{ribbonArt.copy}</BigArt>Copy</BigButton>
          <BigButton $w={42} disabled><BigArt>{ribbonArt.paste}</BigArt>Paste</BigButton>
          <Stack $w={95} $ml={2}>
            <SmallButton>{ribbonArt.cut}Cut</SmallButton>
            <SmallButton>{ribbonArt.path}Copy path</SmallButton>
            <SmallButton disabled>{ribbonArt.shortcut}Paste shortcut</SmallButton>
          </Stack>
        </RibbonGroup>
        <RibbonGroup title="Organize" w={155} pad={8}>
          <Stack $w={72} $loose>
            <SmallButton>{ribbonArt.move}Move to<Caret /></SmallButton>
            <SmallButton>{ribbonArt.copyto}Copy to<Caret /></SmallButton>
          </Stack>
          <InnerRule />
          <Stack $w={66} $loose>
            <SmallButton>{ribbonArt.del}Delete&nbsp;<Caret /></SmallButton>
            <SmallButton>{ribbonArt.rename}Rename</SmallButton>
          </Stack>
        </RibbonGroup>
        <RibbonGroup title="New" w={78} pad={3}>
          <BigButton $w={40}><BigArt>{ribbonArt.newfolder}</BigArt>{"New\nfolder"}</BigButton>
          <Stack $w={26} $ml={3}>
            <SmallButton aria-label="New item">{ribbonArt.newitem}<Caret /></SmallButton>
            <SmallButton aria-label="Easy access">{ribbonArt.easy}<Caret /></SmallButton>
          </Stack>
        </RibbonGroup>
        <RibbonGroup title="Open" w={125} pad={3}>
          <BigButton $w={54}><BigArt><Tick w={21} h={27} /></BigArt>Properties<Caret /></BigButton>
          <Stack $w={66} $ml={4}>
            <SmallButton>{ribbonArt.open}Open&nbsp;<Caret /></SmallButton>
            <SmallButton disabled>{ribbonArt.edit}Edit</SmallButton>
            <SmallButton>{ribbonArt.history}History</SmallButton>
          </Stack>
        </RibbonGroup>
        <RibbonGroup title="Select" w={109} pad={7}>
          <Stack $w={96}>
            <SmallButton><SelectArt on={[0, 1, 2, 3]} />Select all</SmallButton>
            <SmallButton><SelectArt />Select none</SmallButton>
            <SmallButton><SelectArt on={[1, 2]} />Invert selection</SmallButton>
          </Stack>
        </RibbonGroup>
      </Ribbon>
      <AddressRow>
        <NavButton $w={20} aria-label="Back"><Arrow d="M12 6H1M6 1L1 6L6 11" color="#55585c" /></NavButton>
        <NavButton $w={34} aria-label="Forward"><Arrow d="M0 6H11M6 1L11 6L6 11" color="#c9cbce" /></NavButton>
        <NavButton $w={13} aria-label="Recent"><Chevron dir="down" s={7} color="#77797d" /></NavButton>
        <NavButton $w={25} aria-label="Up"><Arrow d="M6 12V1M1 6L6 1L11 6" color="#55585c" /></NavButton>
        <AddressBox>
          <Drive />
          <CrumbGap><Chevron /></CrumbGap>
          <Crumb href="#computer">MC Computer</Crumb>
          <CrumbGap><Chevron /></CrumbGap>
          <Crumb href="#ventoy">Ventoy (C:)</Crumb>
          <CrumbGap><Chevron /></CrumbGap>
          <AddressEnd>
            <NavButton $w={14} aria-label="Previous locations"><Chevron dir="down" s={10} /></NavButton>
            <Refresh aria-label="Refresh">
              <Art w={11} h={11}><path d="M3 2.500A4 4 0 1 0 8 2.500M4.500 1H1.500M8 5.500V2H11" stroke="#55585c" strokeWidth="1.500" /></Art>
            </Refresh>
          </AddressEnd>
        </AddressBox>
        <SearchBox>
          <SearchInput aria-label="Search Ventoy (C:)" placeholder="Search Ventoy (C:)" />
          <Art w={12} h={12}><circle cx="7.500" cy="4.500" r="3.500" stroke="#6a6d71" strokeWidth="1.500" /><path d="M5 7L1 11" stroke="#6a6d71" strokeWidth="2" /></Art>
        </SearchBox>
      </AddressRow>
      <Body>
        <Tree>
          {tree.map((t, i) => (
            <TreeItem key={i} $level={t.level} $selected={t.selected}>{t.icon}{t.name}</TreeItem>
          ))}
        </Tree>
        <ScrollBar>
          <ScrollArrow aria-label="Scroll up"><Chevron dir="up" s={10} /></ScrollArrow>
          <ScrollTrack><ScrollThumb /></ScrollTrack>
          <ScrollArrow aria-label="Scroll down"><Chevron dir="down" s={10} /></ScrollArrow>
        </ScrollBar>
        <Files>
          <FileTable>
            <thead>
              <tr>
                <HeadCell $w={243}><HeadLabel $first>Name</HeadLabel><SortMark><Chevron dir="up" s={9} sw={1} /></SortMark></HeadCell>
                <HeadCell $w={113}><HeadLabel>Date modified</HeadLabel></HeadCell>
                <HeadCell $w={113}><HeadLabel>Type</HeadLabel></HeadCell>
                <HeadCell $w={72}><HeadLabel>Size</HeadLabel></HeadCell>
              </tr>
            </thead>
            <tbody>
              {files.map(([name, date], i) => (
                <FileRow key={name} $selected={i === 1}>
                  <FileCell><FileName>{fileIcon(name)}{name}</FileName></FileCell>
                  <FileCell>{date}</FileCell>
                  <FileCell>File folder</FileCell>
                  <FileCell />
                </FileRow>
              ))}
            </tbody>
          </FileTable>
        </Files>
      </Body>
      <StatusBar>
        <StatusItem>11 items</StatusItem>
        <StatusItem>1 item selected</StatusItem>
        <ViewButtons>
          <ViewButton $on aria-label="Details">
            <Art w={17} h={14}>
              <path d="M1 .5H5V13.500H1Z" fill="#fff" stroke="#9aa0a6" /><path d="M1 5H5M1 9H5" stroke="#c77" />
              <path d="M7 3H11M13 3H16M7 7H11M13 7H16M7 11H11M13 11H16" stroke="#444a50" />
            </Art>
          </ViewButton>
          <ViewButton aria-label="Large icons">
            <Art w={14} h={11}><rect x=".5" y=".5" width="13" height="10" rx="1" fill="#f1f2f3" stroke="#8f9499" /><path d="M2 2H12V8H2Z" fill="#a8d4f5" /><path d="M2 5L7 5L12 8H2Z" fill="#1c4b78" /></Art>
          </ViewButton>
        </ViewButtons>
      </StatusBar>
    </Window>
  );
}

export default function App() {
  return (
    <>
      <GlobalStyle />
      <Screen>
        <Monitor>
          <Desktop>
            <IconGrid>
              {shortcuts.map(([icon, label, col, row]) => (
                <Shortcut key={`${col}-${row}`} $col={col} $row={row}>
                  {icon ? desktopArt[icon] : <Art />}
                  <ShortcutLabel>{label}</ShortcutLabel>
                </Shortcut>
              ))}
            </IconGrid>
            <Explorer />
          </Desktop>
          <Taskbar>
            <TaskButton aria-label="Start">{taskArt.start}</TaskButton>
            <TaskButton aria-label="Command prompt">{taskArt.cmd}</TaskButton>
            <TaskButton aria-label="Display settings">{taskArt.monitor}</TaskButton>
            <TaskButton aria-label="Keyboard">{taskArt.keys}</TaskButton>
            <TaskButton aria-label="File Explorer">{taskArt.explorer}</TaskButton>
            <TaskButton $active aria-label="Ventoy (C:)">{taskArt.drive}</TaskButton>
            <Tray>
              {Object.entries(trayArt).map(([k, v]) => (
                <TrayIcon key={k} aria-label={k}>{v}</TrayIcon>
              ))}
              <Clock>1:28 PM<br />20/08/2021</Clock>
              <ShowDesktop aria-label="Show desktop" />
            </Tray>
          </Taskbar>
          <Pointer>
            <Art w={12} h={20}><path d="M1 1V16L4.500 13L7 19L9.500 18L7 12H11.500Z" fill="#fff" stroke="#111" /></Art>
          </Pointer>
        </Monitor>
      </Screen>
    </>
  );
}
